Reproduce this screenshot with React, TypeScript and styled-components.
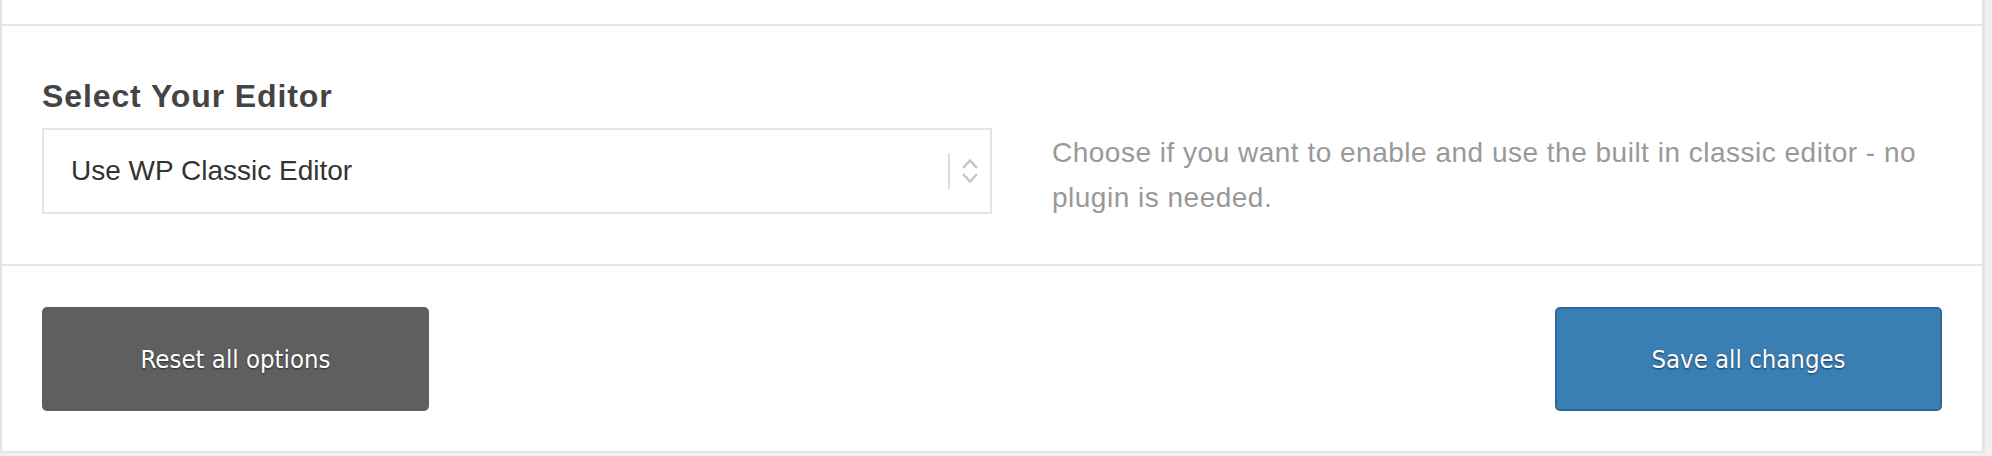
import React from 'react';
import styled, { createGlobalStyle } from 'styled-components';

const GlobalStyle = createGlobalStyle`
    html, body {
        margin: 0;
        padding: 0;
        background-color: #f0f0f0;
    }

    * {
        box-sizing: border-box;
    }
`;

const Panel = styled.div`
    width: 1985px;
    background-color: #ffffff;
    border-left: 2px solid #e5e5e5;
    border-right: 3px solid #e5e5e5;
    border-bottom: 2px solid #e5e5e5;
    font-family: "Liberation Sans", Arial, Helvetica, sans-serif;
`;

const PrevSection = styled.div`
    height: 26px;
    border-bottom: 2px solid #e5e5e5;
`;

const OptionSection = styled.section`
    padding: 50px 40px 44px;
    border-bottom: 2px solid #e5e5e5;
`;

const Label = styled.h3`
    margin: 0 0 12px;
    font-size: 32px;
    line-height: 40px;
    font-weight: 700;
    color: #444444;
    letter-spacing: 0.9px;
`;

const OptionRow = styled.div`
    display: grid;
    grid-template-columns: 950px 1fr;
    align-items: start;
`;

const SelectBox = styled.div`
    height: 86px;
    border: 2px solid #e5e5e5;
    display: flex;
    align-items: center;
    justify-content: space-between;
    padding: 0 11px 0 27px;
    font-size: 28px;
    color: #333333;
    cursor: pointer;
`;

const SelectArrows = styled.div`
    display: flex;
    align-items: center;
    height: 36px;
    border-left: 2px solid #dddddd;
    padding-left: 11px;
`;

const Description = styled.p`
    margin: 0;
    padding: 2px 0 0 60px;
    font-size: 28px;
    line-height: 45px;
    letter-spacing: 0.5px;
    color: #999999;
`;

const Footer = styled.div`
    display: flex;
    justify-content: space-between;
    align-items: center;
    padding: 41px 40px 40px;
`;

const Button = styled.button<{ $primary?: boolean }>`
    width: 387px;
    height: 104px;
    border-radius: 5px;
    border: 2px solid ${p => (p.$primary ? '#2d6896' : '#5f5f5f')};
    background-color: ${p => (p.$primary ? '#3a7fb3' : '#5f5f5f')};
    color: #ffffff;
    font-family: "DejaVu Sans Condensed", "DejaVu Sans", Tahoma, sans-serif;
    font-stretch: condensed;
    font-size: 25.5px;
    text-shadow: 0 1px 2px rgba(0, 0, 0, 0.55);
    cursor: pointer;
`;

function Chevrons() {
    return (
        <svg width="18" height="30" viewBox="0 0 18 30" fill="none" stroke="#c4c4c4" strokeWidth="2.4">
            <polyline points="2,12 9,4.5 16,12" />
            <polyline points="2,18 9,25.5 16,18" />
        </svg>
    );
}

export default function App() {
    return (
        <>
            <GlobalStyle />
            <Panel>
                <PrevSection />

                <OptionSection>
                    <Label>Select Your Editor</Label>
                    <OptionRow>
                        <SelectBox>
                            <span>Use WP Classic Editor</span>
                            <SelectArrows>
                                <Chevrons />
                            </SelectArrows>
                        </SelectBox>
                        <Description>
                            Choose if you want to enable and use the built in classic editor - no plugin is needed.
                        </Description>
                    </OptionRow>
                </OptionSection>

                <Footer>
                    <Button type="button">Reset all options</Button>
                    <Button type="button" $primary>Save all changes</Button>
                </Footer>
            </Panel>
        </>
    );
}
